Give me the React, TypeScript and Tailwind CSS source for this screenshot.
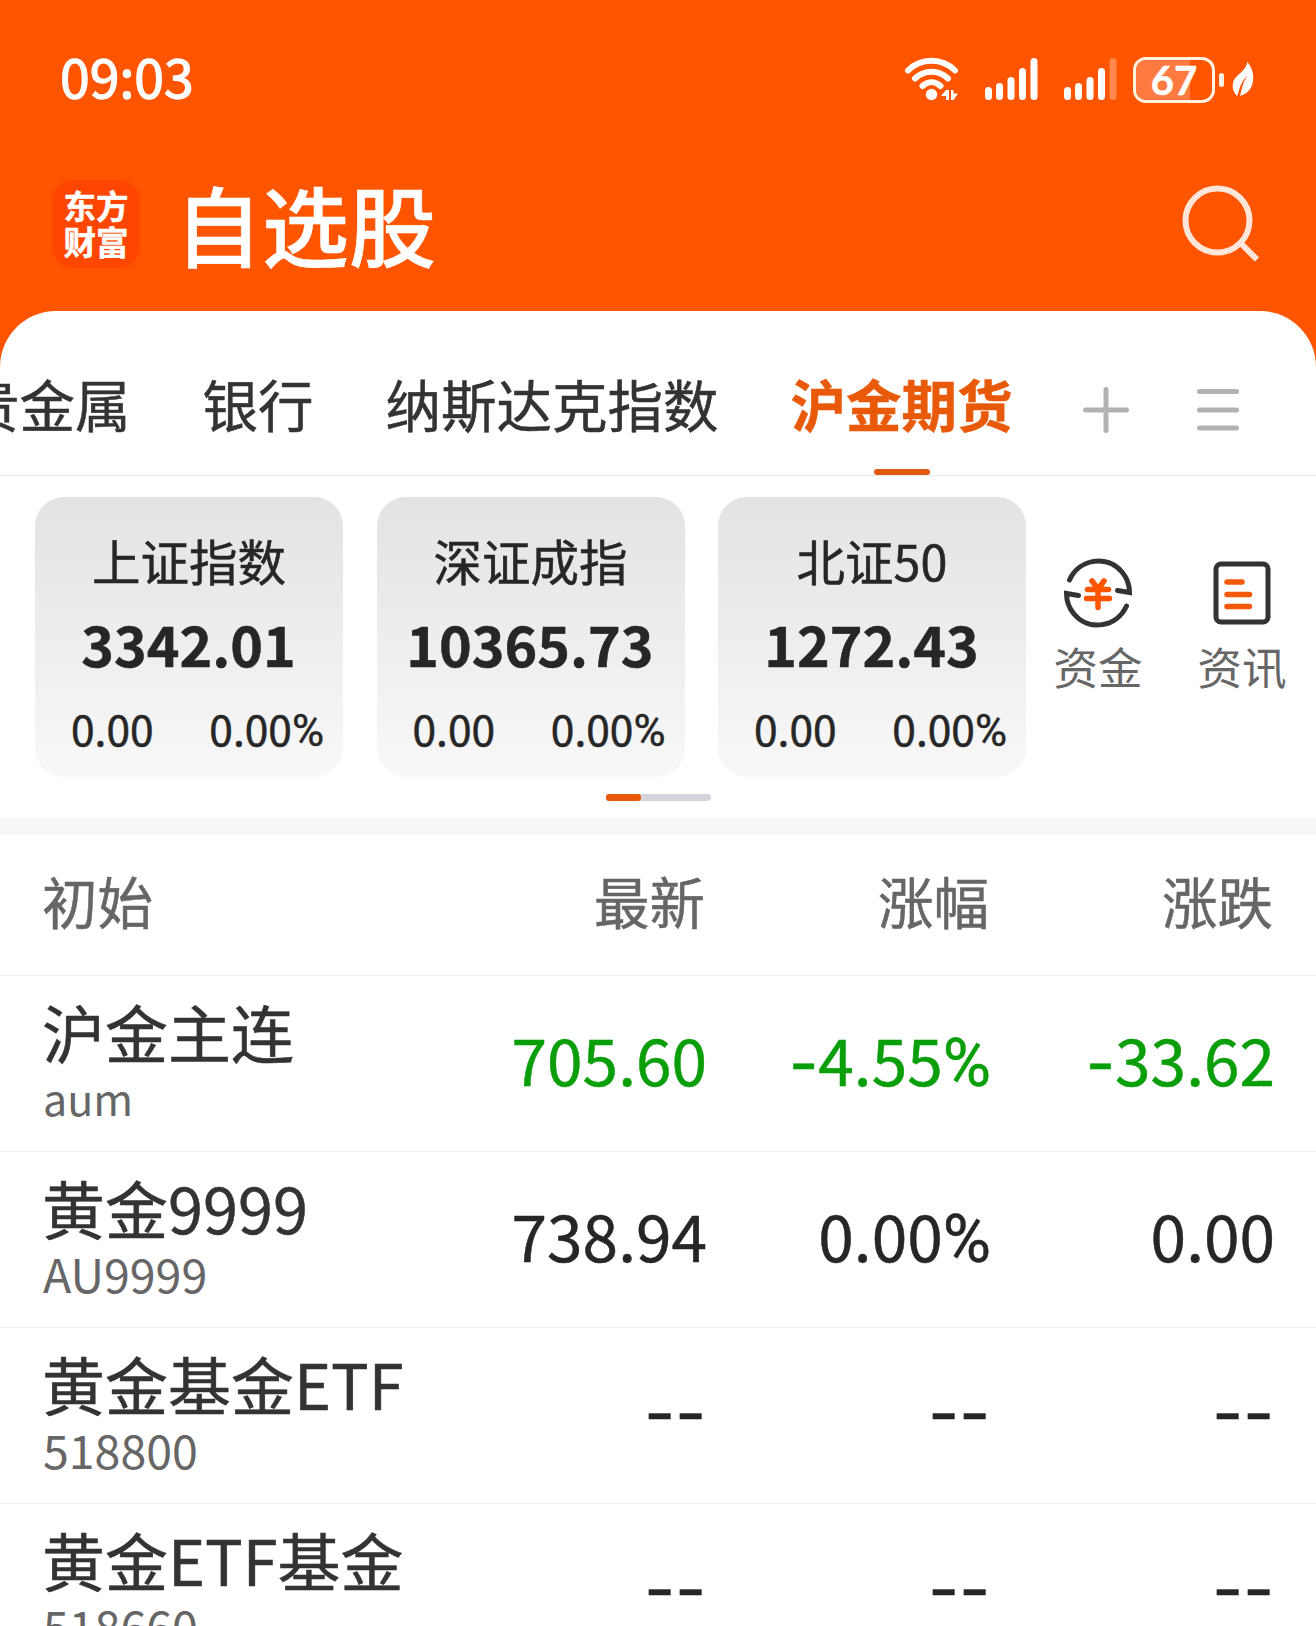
import clsx from 'clsx'

interface IndexCardProps {
  name: string
  value: string
  change: string
  percent: string
}

interface Quote {
  name: string
  code: string
  latest: string
  percent: string
  change: string
  down?: boolean
}

const tabs = ['贵金属', '银行', '纳斯达克指数', '沪金期货']

const indexes: IndexCardProps[] = [
  { name: '上证指数', value: '3342.01', change: '0.00', percent: '0.00%' },
  { name: '深证成指', value: '10365.73', change: '0.00', percent: '0.00%' },
  { name: '北证50', value: '1272.43', change: '0.00', percent: '0.00%' },
]

const quotes: Quote[] = [
  {
    name: '沪金主连',
    code: 'aum',
    latest: '705.60',
    percent: '-4.55%',
    change: '-33.62',
    down: true,
  },
  {
    name: '黄金9999',
    code: 'AU9999',
    latest: '738.94',
    percent: '0.00%',
    change: '0.00',
  },
  {
    name: '黄金基金ETF',
    code: '518800',
    latest: '--',
    percent: '--',
    change: '--',
  },
  {
    name: '黄金ETF基金',
    code: '518660',
    latest: '--',
    percent: '--',
    change: '--',
  },
]

const WifiIcon = () => (
  <svg width="56" height="46" viewBox="0 0 56 46" fill="none">
    <g stroke="#fff" strokeWidth="6" strokeLinecap="round">
      <path d="M4 13.5C17 .5 38 .5 51 13.5" />
      <path d="M11 21.5c9.500-9 23.500-9 33 0" />
      <path d="M18.500 29c5.500-5 12.500-5 18 0" />
    </g>
    <circle cx="27.500" cy="37.500" r="5.700" fill="#fff" />
    <path d="M45 33v10h-3v-4h-5l5-6zM47 33h2.500v3.500H54L49.500 43H47z" fill="#fff" />
  </svg>
)

const SignalIcon = ({ weak }: { weak?: boolean }) => (
  <svg width="54" height="46" viewBox="0 0 54 46" fill="#fff">
    <rect x="1" y="30" width="7" height="13" rx="3.500" />
    <rect x="12" y="26" width="7" height="17" rx="3.500" />
    <rect x="23.500" y="20" width="7" height="23" rx="3.500" />
    <rect x="35" y="11" width="7" height="32" rx="3.500" />
    <rect
      x="46.500"
      y="1"
      width="7"
      height="42"
      rx="3.500"
      opacity={weak ? 0.3 : 1}
    />
  </svg>
)

const Battery = () => (
  <div className="flex items-center">
    <div className="relative h-[46px] w-[82px] overflow-hidden rounded-[13px] border-[3.500px] border-[#fff1e0]">
      <div className="h-full w-[54px] bg-[#ff7a40]" />
      <span className="absolute inset-0 text-center font-[Lato] text-[40px] leading-[40px] font-bold">
        67
      </span>
    </div>
    <div className="ml-1 h-3.5 w-[5px] rounded-full bg-[#fff1e0]" />
  </div>
)

const LeafIcon = () => (
  <svg width="22" height="36" viewBox="0 0 22 36">
    <path
      d="M15.500 0c4.500 6 6.500 12 5.500 19-1 8-6 13-13 15l2-8c1-5 3-9 6-13-5 5-8 10-10 19l-1 2C1.500 30 0 26 1 21 2.500 12.500 13 11 15.500 0z"
      fill="#fff"
    />
  </svg>
)

const SearchIcon = () => (
  <svg width="78" height="78" viewBox="0 0 78 78" fill="none">
    <g stroke="#ffe6d9" strokeWidth="6">
      <circle cx="35.500" cy="35.500" r="32" />
      <path d="m58 57.500 17 17" />
    </g>
  </svg>
)

const FundIcon = () => (
  <svg width="70" height="70" viewBox="0 0 70 70" fill="none">
    <g stroke="#333" strokeWidth="5" strokeLinecap="round">
      <path d="M6.500 22C16 1 44-4 59 14c5 6 7.500 13 7.500 20.500L54.500 32.500" />
      <path d="M63.500 48C54 69 26 74 11 56 6 50 3.500 43 3.500 35.500l12 2" />
    </g>
    <g stroke="#ff5500" strokeWidth="5.500" strokeLinecap="round">
      <path d="m29 23 6 8 6-8M24.500 31.500h21M23.500 40.500h23M35 31.500v18" />
    </g>
  </svg>
)

const NewsIcon = () => (
  <svg width="58" height="70" viewBox="0 0 58 70" fill="none">
    <rect
      x="3"
      y="6"
      width="52"
      height="58"
      rx="5"
      stroke="#333"
      strokeWidth="5"
    />
    <path
      d="M14 24h15M14 36.500h22.500M14 48.500h22.500"
      stroke="#f25a0a"
      strokeWidth="5.500"
      strokeLinecap="round"
    />
  </svg>
)

// The minus and percent signs come from other faces than the digits.
const Figure = ({ text }: { text: string }) => (
  <>
    {text.split('').map((char, idx) => (
      <span
        key={idx}
        className={clsx(
          char === '-' && 'font-[Inter] leading-none',
          char === '-' && text === '--' && 'align-[1px] text-[67px]',
          char === '%' && 'font-[Roboto] text-[1.03em] leading-none',
        )}
      >
        {char}
      </span>
    ))}
  </>
)

const IndexCard = ({ name, value, change, percent }: IndexCardProps) => (
  <div className="h-[280px] w-[308px] rounded-[29px] bg-linear-to-b from-[#e3e3e3] to-[#f8f8f8] pt-[31px] text-[#262626]">
    <p className="text-center text-[48.500px] leading-[64px]">{name}</p>
    <p className="mt-[18px] pr-px text-center text-[55.500px] leading-[66px] font-bold">
      {value}
    </p>
    <div className="mt-[22px] flex justify-between pr-[19px] pl-[36px] text-[42.500px] leading-[60px]">
      <span>{change}</span>
      <span>
        <Figure text={percent} />
      </span>
    </div>
  </div>
)

const QuoteRow = ({ name, code, latest, percent, change, down }: Quote) => (
  <div className="grid h-[176px] grid-cols-[380px_285px_284px_284px] border-b border-[#eee] pl-[42px]">
    <div className="pt-[19px] whitespace-nowrap">
      <p className="text-[63px] leading-[72px] text-[#333]">{name}</p>
      <p
        className={clsx(
          'pl-px leading-[60px] text-[#666] [-webkit-text-stroke:0px]',
          code === 'aum' ? 'text-[43px]' : 'text-[46.500px]',
        )}
      >
        {code}
      </p>
    </div>
    {[latest, percent, change].map((text, idx) => (
      <p
        key={idx}
        className={clsx(
          'text-right text-[64px] leading-[164px]',
          down ? 'text-[#0a9f0a]' : 'text-[#262626]',
          text === '--' && 'pr-px',
        )}
      >
        <Figure text={text} />
      </p>
    ))}
  </div>
)

export default function App() {
  return (
    <div className="h-[1626px] w-[1316px] overflow-hidden bg-[#ff5500] font-['Noto_Sans_CJK_SC',sans-serif] [-webkit-text-stroke:0.5px]">
      <header className="h-[311px] pt-[57px] text-white">
        <div className="flex h-[46px] items-center pr-[62px] pl-[60px]">
          <span className="pb-[11px] text-[53.500px] leading-[60px] [-webkit-text-stroke:1.3px]">
            09:03
          </span>
          <div className="ml-auto flex items-center">
            <WifiIcon />
            <div className="ml-[24px] flex gap-[25px]">
              <SignalIcon />
              <SignalIcon weak />
            </div>
            <div className="ml-[16px]">
              <Battery />
            </div>
            <div className="ml-2">
              <LeafIcon />
            </div>
          </div>
        </div>

        <div className="mt-[77px] flex h-[88px] items-center pr-[56px] pl-[52px]">
          <div className="h-[88px] w-[88px] rounded-[20px] bg-[#ff4600] pt-[7px] text-center text-[32.500px] leading-[36px] font-bold">
            <p>东方</p>
            <p>财富</p>
          </div>
          <h1 className="ml-[35px] pb-[3px] text-[87px] leading-[88px] font-medium">
            自选股
          </h1>
          <div className="ml-auto">
            <SearchIcon />
          </div>
        </div>
      </header>

      <main className="h-[1315px] rounded-t-[56px] bg-white">
        <nav className="flex h-[165px] items-center border-b border-[#e8e8e8]">
          <div className="-ml-[36px] flex h-full gap-[72px] text-[55.500px] whitespace-nowrap">
            {tabs.map((tab) => (
              <div
                key={tab}
                className={clsx(
                  'flex h-full flex-col items-center',
                  tab === '沪金期货'
                    ? 'font-bold text-[#e85a0a]'
                    : 'text-[#333]',
                )}
              >
                <span className="pt-[57px] leading-[70px]">{tab}</span>
                {tab === '沪金期货' && (
                  <div className="mt-auto h-1.5 w-14 rounded-[3px] bg-[#e05a10]" />
                )}
              </div>
            ))}
          </div>
          <svg
            className="mt-[34px] ml-[70px]"
            width="46"
            height="46"
            viewBox="0 0 46 46"
          >
            <path
              d="M23 2.500v41M2.500 23h41"
              stroke="#b2b2b2"
              strokeWidth="5"
              strokeLinecap="round"
            />
          </svg>
          <svg
            className="mt-[34px] ml-[68px]"
            width="42"
            height="46"
            viewBox="0 0 42 46"
          >
            <path
              d="M2.500 4.500h37M2.500 23h37M2.500 41h37"
              stroke="#b2b2b2"
              strokeWidth="5"
              strokeLinecap="round"
            />
          </svg>
        </nav>

        <section className="h-[342px] pt-[21px]">
          <div className="flex pl-[35px]">
            <div className="flex gap-[33.500px]">
              {indexes.map((item) => (
                <IndexCard key={item.name} {...item} />
              ))}
            </div>
            <div className="ml-[28px] flex gap-[56px] pt-[61px] text-[44.500px] leading-[60px] text-[#666]">
              <div className="flex w-[88px] flex-col items-center whitespace-nowrap">
                <FundIcon />
                <p className="mt-[8px] [-webkit-text-stroke:0px]">资金</p>
              </div>
              <div className="flex w-[88px] flex-col items-center whitespace-nowrap">
                <NewsIcon />
                <p className="mt-[8px] [-webkit-text-stroke:0px]">资讯</p>
              </div>
            </div>
          </div>
          <div className="mx-auto mt-[17px] h-[7px] w-[105px] rounded-full bg-[#d4d5dc]">
            <div className="h-full w-[35px] rounded-[3px] bg-[#e85a0a]" />
          </div>
        </section>

        <div className="h-[17px] bg-[#f6f7f9]" />

        <section>
          <div className="grid h-[141px] grid-cols-[380px_285px_284px_284px] border-b border-[#eee] pl-[42px] text-[55.500px] leading-[131px] text-[#666]">
            <p>初始</p>
            <p className="pr-[2px] text-right">最新</p>
            <p className="pr-[2px] text-right">涨幅</p>
            <p className="pr-[2px] text-right">涨跌</p>
          </div>
          {quotes.map((quote) => (
            <QuoteRow key={quote.code} {...quote} />
          ))}
        </section>
      </main>
    </div>
  )
}
